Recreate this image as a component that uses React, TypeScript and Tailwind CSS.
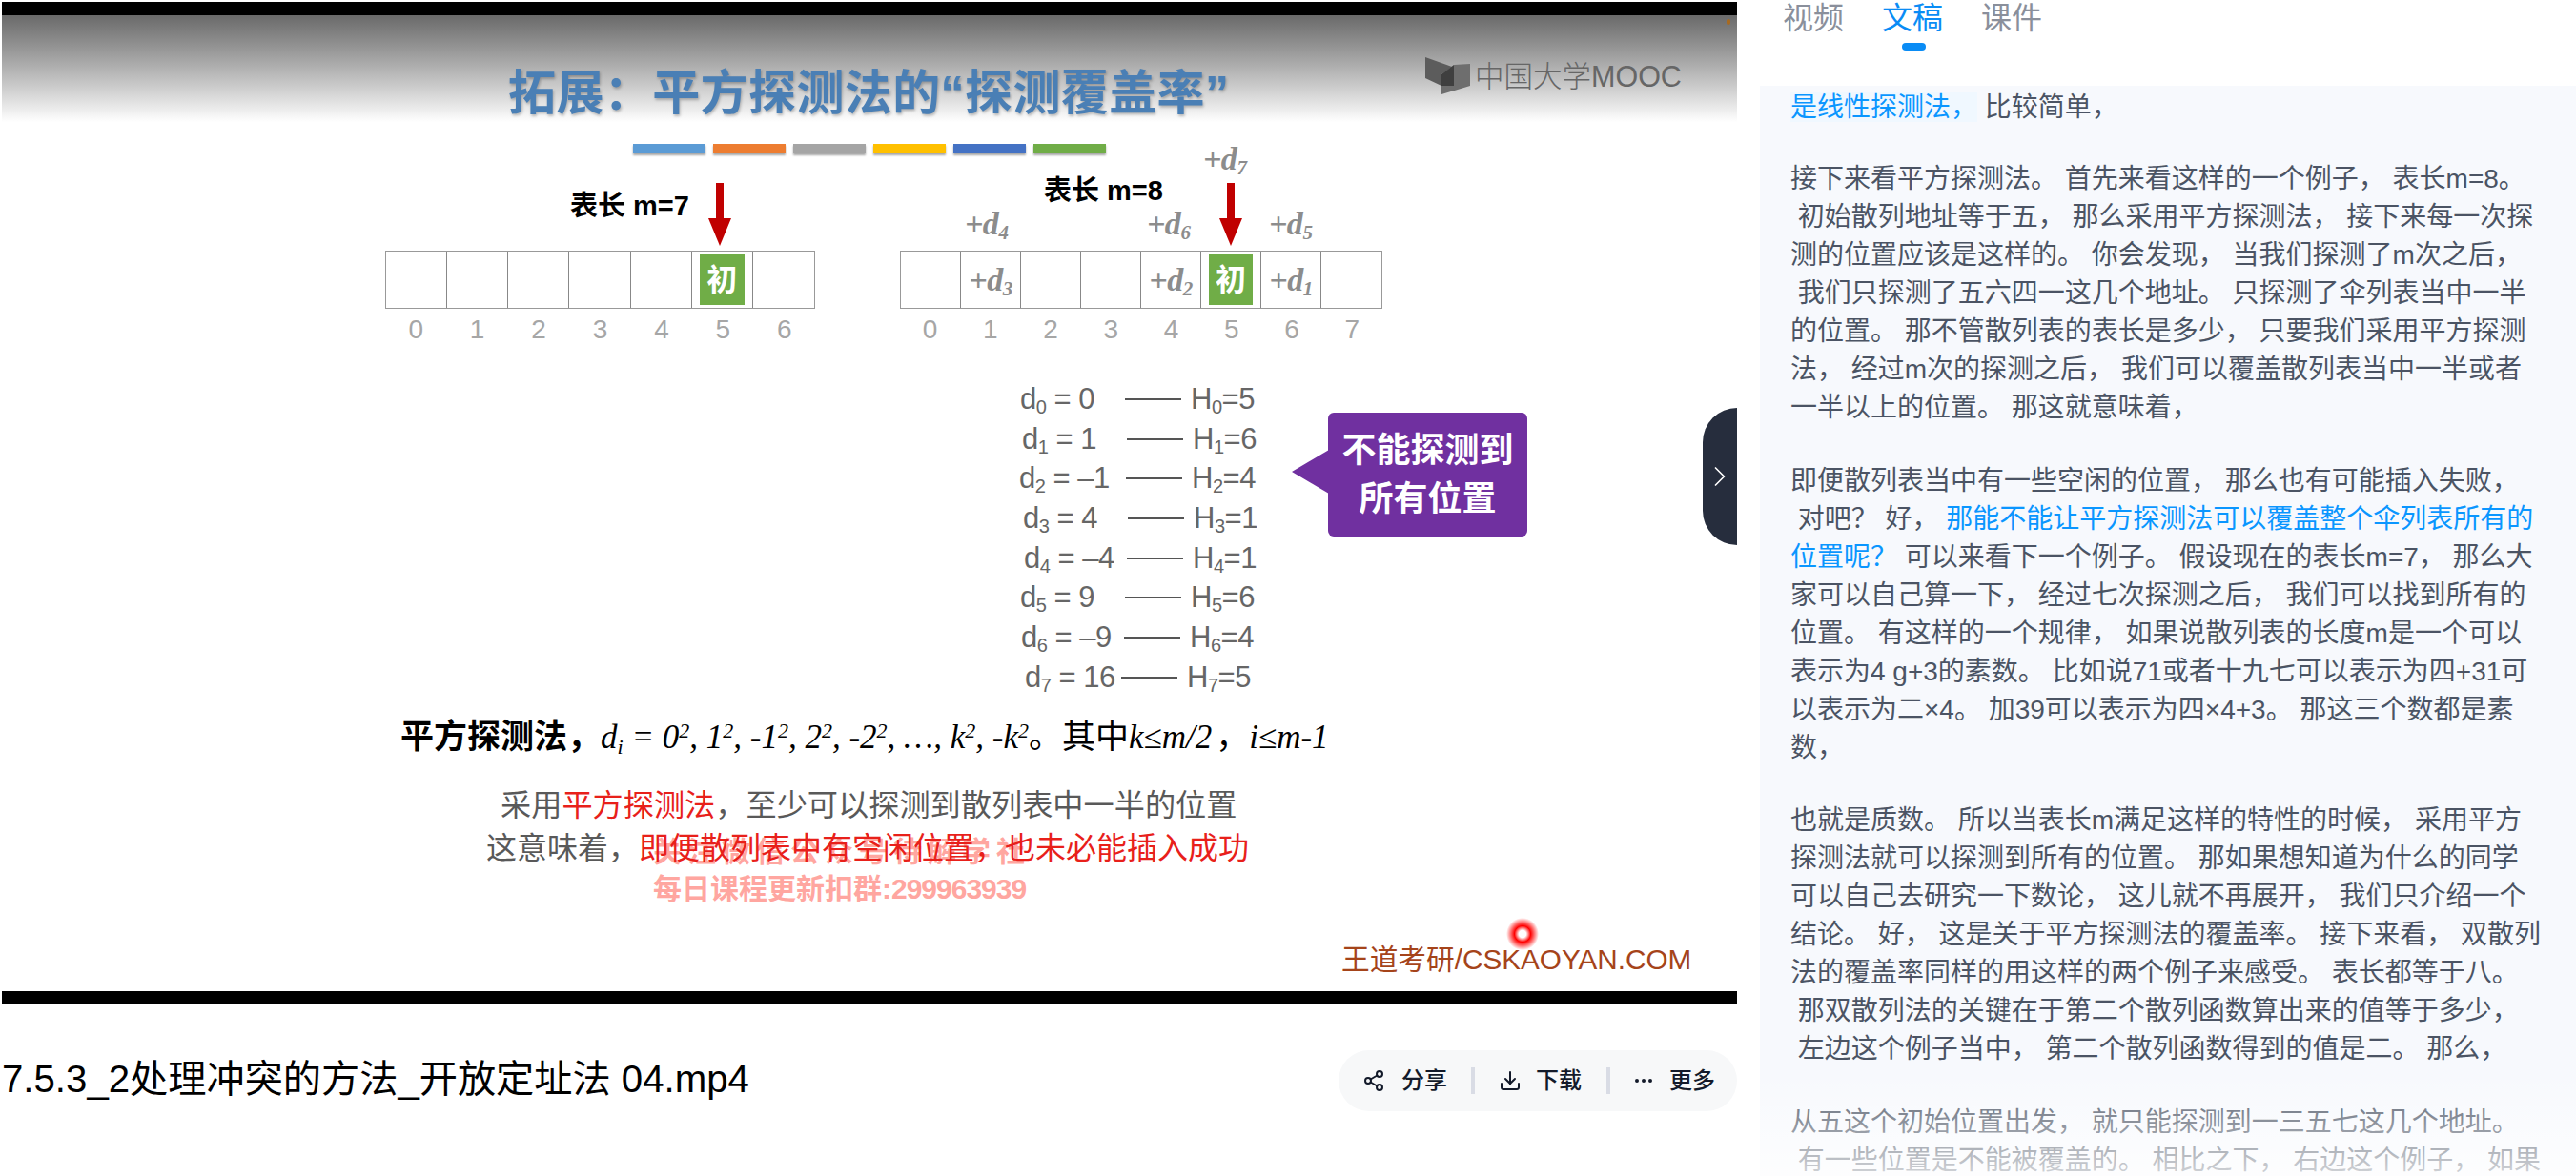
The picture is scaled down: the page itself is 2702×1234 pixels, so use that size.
import { Share2, Download, Ellipsis, ChevronRight } from "lucide-react";

const BARS = ["bg-[#5b9bd5]", "bg-[#ed7d31]", "bg-[#a5a5a5]", "bg-[#ffc000]", "bg-[#4472c4]", "bg-[#70ad47]"];

// d start offset, width up to the line
const ROWS = [
  { n: "0", v: "0", h: "5", pad: "ml-[10px]", w: "w-[110px]" },
  { n: "1", v: "1", h: "6", pad: "ml-[12px]", w: "w-[110px]" },
  { n: "2", v: "–1", h: "4", pad: "ml-[9px]", w: "w-[112px]" },
  { n: "3", v: "4", h: "1", pad: "ml-[13px]", w: "w-[110px]" },
  { n: "4", v: "–4", h: "1", pad: "ml-[14px]", w: "w-[108px]" },
  { n: "5", v: "9", h: "6", pad: "ml-[10px]", w: "w-[110px]" },
  { n: "6", v: "–9", h: "4", pad: "ml-[11px]", w: "w-[108px]" },
  { n: "7", v: "16", h: "5", pad: "ml-[15px]", w: "w-[101px]" },
];

const BLUE = "text-[#0a96ff]";

function Probe({ n }: { n: string }) {
  return (
    <span className="font-['Liberation_Serif',serif] text-[34px] leading-none font-bold italic tracking-[-0.5px] text-[#8c8c8c] whitespace-nowrap">
      +d<sub className="text-[21px] font-bold">{n}</sub>
    </span>
  );
}

function Arrow({ className }: { className: string }) {
  return (
    <svg className={className} width="24" height="66" viewBox="0 0 24 66">
      <rect x="8" y="0" width="8" height="38" fill="#c00000" />
      <polygon points="0,37 24,37 12,66" fill="#c00000" />
    </svg>
  );
}

function Start() {
  return <div className="flex h-[53px] flex-1 items-center justify-center bg-[#70ad47] text-[32px] font-bold text-white">初</div>;
}

function Line({ children }: { children: React.ReactNode }) {
  return <div className="whitespace-pre">{children}</div>;
}

function Transcript() {
  return (
    <div className="text-[28px] leading-[40px] text-[#4b5464]">
      <Line>
        <span className={`${BLUE} bg-[#f0f8ff]`}>是线性探测法，</span> 比较简单，
      </Line>
      <div className="mt-[35px]">
        <Line>接下来看平方探测法。 首先来看这样的一个例子， 表长m=8。</Line>
        <Line> 初始散列地址等于五， 那么采用平方探测法， 接下来每一次探</Line>
        <Line>测的位置应该是这样的。 你会发现， 当我们探测了m次之后，</Line>
        <Line> 我们只探测了五六四一这几个地址。 只探测了伞列表当中一半</Line>
        <Line>的位置。 那不管散列表的表长是多少， 只要我们采用平方探测</Line>
        <Line>法， 经过m次的探测之后， 我们可以覆盖散列表当中一半或者</Line>
        <Line>一半以上的位置。 那这就意味着，</Line>
      </div>
      <div className="mt-[37px]">
        <Line>即便散列表当中有一些空闲的位置， 那么也有可能插入失败，</Line>
        <Line>
          {" 对吧？ 好， "}
          <span className={BLUE}>那能不能让平方探测法可以覆盖整个伞列表所有的</span>
        </Line>
        <Line>
          <span className={BLUE}>位置呢？</span> 可以来看下一个例子。 假设现在的表长m=7， 那么大
        </Line>
        <Line>家可以自己算一下， 经过七次探测之后， 我们可以找到所有的</Line>
        <Line>位置。 有这样的一个规律， 如果说散列表的长度m是一个可以</Line>
        <Line>表示为4 g+3的素数。 比如说71或者十九七可以表示为四+31可</Line>
        <Line>以表示为二×4。 加39可以表示为四×4+3。 那这三个数都是素</Line>
        <Line>数，</Line>
      </div>
      <div className="mt-[36px]">
        <Line>也就是质数。 所以当表长m满足这样的特性的时候， 采用平方</Line>
        <Line>探测法就可以探测到所有的位置。 那如果想知道为什么的同学</Line>
        <Line>可以自己去研究一下数论， 这儿就不再展开， 我们只介绍一个</Line>
        <Line>结论。 好， 这是关于平方探测法的覆盖率。 接下来看， 双散列</Line>
        <Line>法的覆盖率同样的用这样的两个例子来感受。 表长都等于八。</Line>
        <Line> 那双散列法的关键在于第二个散列函数算出来的值等于多少，</Line>
        <Line> 左边这个例子当中， 第二个散列函数得到的值是二。 那么，</Line>
      </div>
      <div className="mt-[37px]">
        <Line>从五这个初始位置出发， 就只能探测到一三五七这几个地址。</Line>
        <Line> 有一些位置是不能被覆盖的。 相比之下， 右边这个例子， 如果</Line>
      </div>
    </div>
  );
}

function Slide() {
  return (
    <>
      {/* slide header */}
      <div className="absolute left-[533px] top-[67px] text-[50px] leading-[62px] font-bold tracking-[0.4px] whitespace-nowrap text-[#4a7fb5] [text-shadow:1px_2px_3px_rgba(0,0,0,0.25)]">
        拓展：平方探测法的“探测覆盖率”
      </div>
      <div className="absolute left-[1495px] top-[60px] flex items-center">
        <svg width="47" height="40" viewBox="0 0 47 40">
          <polygon points="0,0 28,10 17,18 17,30 0,22" fill="#5c5c5c" />
          <polygon points="30,8 47,7 47,30 17,39 17,30 30,30" fill="#6e6e6e" />
          <polygon points="17,18 30,8 30,30 17,30" fill="#3f3f3f" />
        </svg>
        <span className="ml-[5px] text-[30.5px] leading-none font-light text-[#666666] whitespace-nowrap">中国大学MOOC</span>
      </div>
      <div className="absolute left-[664px] top-[151px] flex gap-[8px]">
        {BARS.map((c) => (
          <div key={c} className={`h-[10px] w-[76px] shadow-[0_2px_2px_rgba(0,0,0,0.35)] ${c}`} />
        ))}
      </div>

      {/* left table */}
      <div className="absolute left-[598px] top-[200px] text-[29px] leading-[32px] font-bold text-black whitespace-nowrap">表长 m=7</div>
      <Arrow className="absolute left-[743px] top-[192px]" />
      <div className="absolute left-[404px] top-[263px] w-[451px]">
        <div className="grid h-[61px] grid-cols-7 border border-[#999999]">
          {[0, 1, 2, 3, 4, 5, 6].map((i) => (
            <div key={i} className="flex items-center border-r border-[#888888] px-[8px] last:border-r-0">
              {i === 5 && <Start />}
            </div>
          ))}
        </div>
        <div className="mt-[7px] grid grid-cols-7 text-center text-[28px] leading-[30px] text-[#a6a6a6]">
          {[0, 1, 2, 3, 4, 5, 6].map((i) => (
            <div key={i}>{i}</div>
          ))}
        </div>
      </div>

      {/* right table */}
      <div className="absolute left-[1095px] top-[184px] text-[29px] leading-[32px] font-bold text-black whitespace-nowrap">表长 m=8</div>
      <Arrow className="absolute left-[1279px] top-[192px]" />
      <div className="absolute left-[1262px] top-[150px]"><Probe n="7" /></div>
      <div className="absolute left-[1012px] top-[218px]"><Probe n="4" /></div>
      <div className="absolute left-[1203px] top-[218px]"><Probe n="6" /></div>
      <div className="absolute left-[1331px] top-[218px]"><Probe n="5" /></div>
      <div className="absolute left-[944px] top-[263px] w-[506px]">
        <div className="grid h-[61px] grid-cols-8 border border-[#999999]">
          {["", "3", "", "", "2", "S", "1", ""].map((v, i) => (
            <div key={i} className="flex items-center justify-center border-r border-[#888888] px-[8px] last:border-r-0">
              {v === "S" ? <Start /> : v ? <Probe n={v} /> : null}
            </div>
          ))}
        </div>
        <div className="mt-[7px] grid grid-cols-8 text-center text-[28px] leading-[30px] text-[#a6a6a6]">
          {[0, 1, 2, 3, 4, 5, 6, 7].map((i) => (
            <div key={i}>{i}</div>
          ))}
        </div>
      </div>

      {/* d / H list */}
      <div className="absolute left-[1060px] top-[398px] text-[31px] leading-[41.7px] tracking-[-0.5px] text-[#666666]">
        {ROWS.map((r) => (
          <div key={r.n} className="flex h-[41.7px] items-center whitespace-nowrap">
            <span className={`${r.pad} ${r.w}`}>
              d<sub className="text-[20px]">{r.n}</sub> = {r.v}
            </span>
            <span className="h-[2px] w-[59px] bg-[#555555]" />
            <span className="ml-[10px]">
              H<sub className="text-[20px]">{r.n}</sub>={r.h}
            </span>
          </div>
        ))}
      </div>

      {/* callout */}
      <div className="absolute left-[1393px] top-[433px] flex h-[130px] w-[209px] flex-col items-center justify-center rounded-[6px] bg-[#7030a0] text-[36px] leading-[51px] font-bold text-white">
        <div>不能探测到</div>
        <div>所有位置</div>
      </div>
      <svg className="absolute left-[1355px] top-[472px]" width="39" height="46" viewBox="0 0 39 46">
        <polygon points="39,0 39,46 0,23" fill="#7030a0" />
      </svg>

      {/* notes */}
      <div className="absolute left-[420px] top-[750px] flex items-baseline text-[35px] leading-[46px] text-black whitespace-nowrap">
        <span className="font-bold">平方探测法，</span>
        <span className="font-['Liberation_Serif',serif] text-[35px] italic">
          d<sub className="text-[22px]">i</sub> = 0<sup className="text-[22px]">2</sup>, 1<sup className="text-[22px]">2</sup>, -1<sup className="text-[22px]">2</sup>, 2<sup className="text-[22px]">2</sup>, -2<sup className="text-[22px]">2</sup>, …, k<sup className="text-[22px]">2</sup>, -k<sup className="text-[22px]">2</sup>
        </span>
        <span>。其中</span>
        <span className="font-['Liberation_Serif',serif] italic">k≤m/2</span>
        <span className="ml-[4px]">，</span>
        <span className="font-['Liberation_Serif',serif] italic">i≤m-1</span>
      </div>
      <div className="absolute left-[685px] top-[874px] text-[30px] leading-[39px] font-bold whitespace-nowrap text-[#ffa6a0]">
        <div className="tracking-[6px]">关注微信公众号待解学社</div>
        <div>
          每日课程更新扣群:<span className="tracking-[-1px]">299963939</span>
        </div>
      </div>
      <div className="absolute left-[525px] top-[823px] text-[32.2px] leading-[44px] text-[#595959] whitespace-nowrap">
        采用<span className="text-[#e8201a]">平方探测法</span>，至少可以探测到散列表中一半的位置
      </div>
      <div className="absolute left-[510px] top-[868px] text-[32px] leading-[44px] text-[#595959] whitespace-nowrap">
        这意味着，<span className="text-[#e8201a]">即便散列表中有空闲位置，也未必能插入成功</span>
      </div>

      <div className="absolute left-[1407px] top-[988px] text-[29.7px] leading-[38px] text-[#a5441a] whitespace-nowrap">王道考研/CSKAOYAN.COM</div>

      {/* laser pointer + speck */}
      <div className="absolute left-[1580px] top-[963px] h-[34px] w-[34px] rounded-full bg-[radial-gradient(circle_closest-side,#ffffff_0%,#ffffff_22%,#ff0000_50%,#ff000000_100%)]" />
      <div className="absolute left-[1811px] top-[20px] h-[6px] w-[4px] rounded-full bg-[#a86a20]" />

      {/* collapse handle */}
      <div className="absolute left-[1786px] top-[428px] flex h-[144px] w-[36px] items-center justify-center rounded-l-[36px] bg-[#262d3d] text-white">
        <ChevronRight size={48} strokeWidth={1.1} />
      </div>
    </>
  );
}

export default function App() {
  return (
    <div lang="zh-CN" className="flex h-[1234px] w-[2702px] overflow-hidden bg-white font-['Liberation_Sans','Noto_Sans_CJK_SC',sans-serif]">
      {/* video column */}
      <div className="relative flex w-[1822px] shrink-0 flex-col pl-[2px] pt-[2px]">
        <div className="h-[14px] bg-black" />
        <div className="h-[112px] bg-gradient-to-b from-[#6a6a6a] to-white" />
        <div className="h-[912px]" />
        <div className="h-[14px] bg-black" />
        <Slide />
        <div className="flex h-[112px] items-center justify-between">
          <div className="mt-[46px] text-[40.2px] leading-[54px] text-black whitespace-nowrap">7.5.3_2处理冲突的方法_开放定址法 04.mp4</div>
          <div className="mt-[48px] flex h-[64px] w-[418px] shrink-0 items-center rounded-full bg-[#f7f8f9] pl-[25px] text-[24px] font-medium text-[#131a2a]">
            <Share2 size={24} strokeWidth={2} />
            <span className="ml-[17px] w-[48px]">分享</span>
            <span className="ml-[25px] h-[28px] w-[4px] bg-[#d9dce5]" />
            <Download size={24} strokeWidth={2} className="ml-[25px]" />
            <span className="ml-[15px] w-[48px]">下载</span>
            <span className="ml-[26px] h-[28px] w-[4px] bg-[#d9dce5]" />
            <Ellipsis size={24} strokeWidth={2} className="ml-[23px]" />
            <span className="ml-[15px] w-[48px]">更多</span>
          </div>
        </div>
      </div>

      {/* transcript column */}
      <div className="flex min-w-0 flex-1 flex-col">
        <div className="h-[90px] pl-[48px] pt-[1px]">
          <div className="flex gap-[40px] text-[32px] leading-[36px] text-[#8a8f9b]">
            <div>视频</div>
            <div className="relative text-[#0a8cf5]">
              文稿
              <span className="absolute left-[21px] top-[44px] h-[8px] w-[25px] rounded-full bg-[#0a8cf5]" />
            </div>
            <div>课件</div>
          </div>
        </div>
        <div className="relative ml-[24px] flex-1 overflow-hidden bg-[#f7f9fd] pl-[32px] pt-[3px]">
          <Transcript />
          <div className="absolute inset-x-0 bottom-0 h-[110px] bg-gradient-to-b from-white/0 to-white/75" />
        </div>
      </div>
    </div>
  );
}
